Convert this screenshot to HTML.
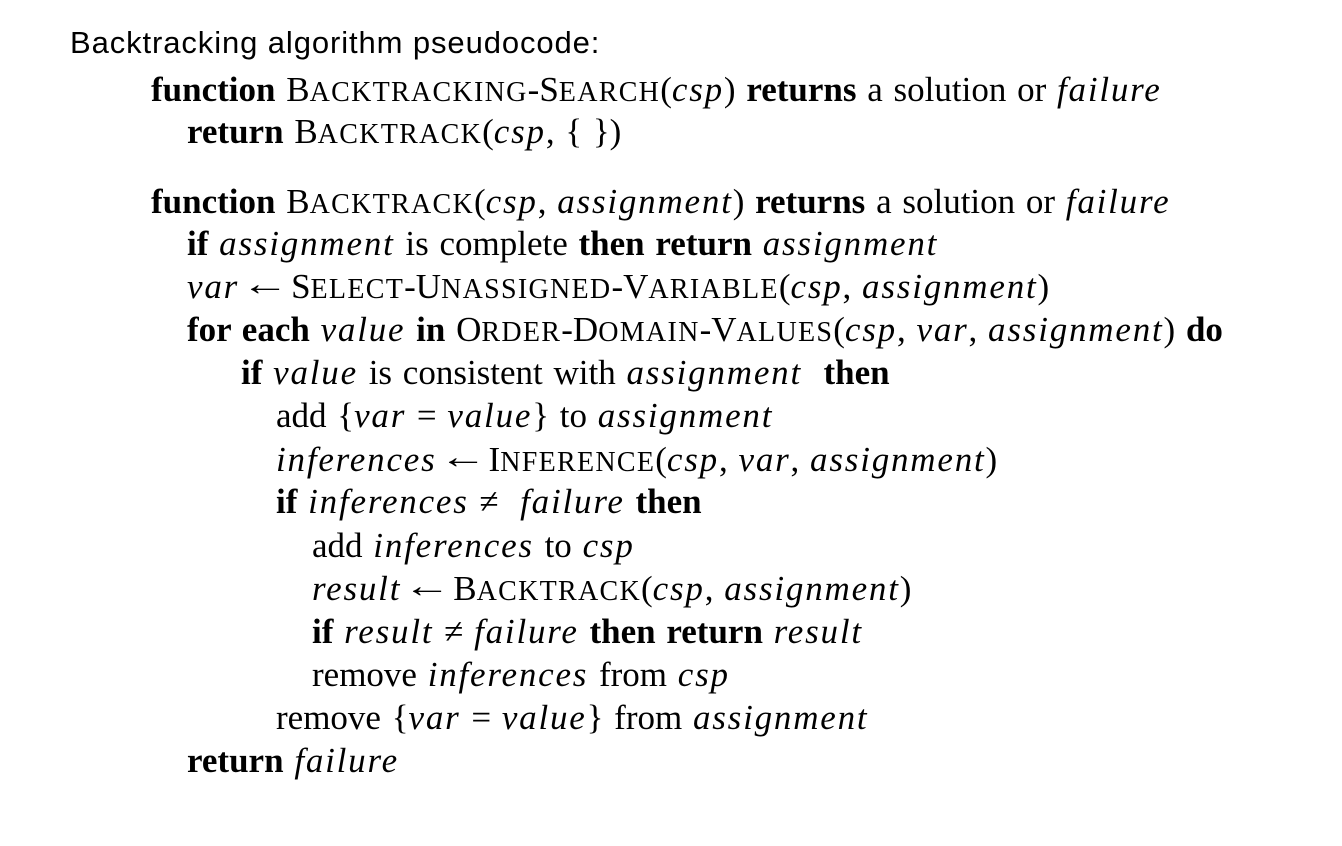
<!DOCTYPE html>
<html><head><meta charset="utf-8"><style>
body{margin:0;background:#fff;width:1342px;height:846px;position:relative;overflow:hidden;}
.t{position:absolute;left:70px;top:25px;font-family:"Liberation Sans",sans-serif;font-size:31px;letter-spacing:0.9px;color:#000;white-space:nowrap;}
.l{position:absolute;font-family:"Liberation Serif",serif;font-size:35px;line-height:32px;color:#000;white-space:nowrap;word-spacing:2px;}
b{font-weight:bold}
i{font-style:italic;letter-spacing:1.8px}
s{text-decoration:none;font-size:28px;letter-spacing:1.3px}
.a{font-size:34px;display:inline-block;transform:scaleX(1.4);margin:0 9px;position:relative;top:-3px}
</style></head><body>
<div class="t">Backtracking algorithm pseudocode:</div>
<div class="l" style="left:151px;top:74px"><b>function</b> B<s>ACKTRACKING</s>-S<s>EARCH</s>(<i>csp</i>) <b>returns</b> a solution or <i>failure</i></div>
<div class="l" style="left:187px;top:116px"><b>return</b> B<s>ACKTRACK</s>(<i>csp</i>, { })</div>
<div class="l" style="left:151px;top:186px"><b>function</b> B<s>ACKTRACK</s>(<i>csp</i>, <i>assignment</i>) <b>returns</b> a solution or <i>failure</i></div>
<div class="l" style="left:187px;top:228px"><b>if</b> <i>assignment</i> is complete <b>then return</b> <i>assignment</i></div>
<div class="l" style="left:187px;top:271px"><i>var</i><span class="a">←</span>S<s>ELECT</s>-U<s>NASSIGNED</s>-V<s>ARIABLE</s>(<i>csp</i>, <i>assignment</i>)</div>
<div class="l" style="left:187px;top:314px"><b>for each</b> <i>value</i> <b>in</b> O<s>RDER</s>-D<s>OMAIN</s>-V<s>ALUES</s>(<i>csp</i>, <i>var</i>, <i>assignment</i>) <b>do</b></div>
<div class="l" style="left:241px;top:357px"><b>if</b> <i>value</i> is consistent with <i>assignment</i> &nbsp;<b>then</b></div>
<div class="l" style="left:276px;top:400px">add {<i>var</i> = <i>value</i>} to <i>assignment</i></div>
<div class="l" style="left:276px;top:444px"><i>inferences</i><span class="a">←</span>I<s>NFERENCE</s>(<i>csp</i>, <i>var</i>, <i>assignment</i>)</div>
<div class="l" style="left:276px;top:486px"><b>if</b> <i>inferences</i> ≠ &nbsp;<i>failure</i> <b>then</b></div>
<div class="l" style="left:312px;top:530px">add <i>inferences</i> to <i>csp</i></div>
<div class="l" style="left:312px;top:573px"><i>result</i><span class="a">←</span>B<s>ACKTRACK</s>(<i>csp</i>, <i>assignment</i>)</div>
<div class="l" style="left:312px;top:616px"><b>if</b> <i>result</i> ≠ <i>failure</i> <b>then return</b> <i>result</i></div>
<div class="l" style="left:312px;top:659px">remove <i>inferences</i> from <i>csp</i></div>
<div class="l" style="left:276px;top:702px">remove {<i>var</i> = <i>value</i>} from <i>assignment</i></div>
<div class="l" style="left:187px;top:745px"><b>return</b> <i>failure</i></div>
</body></html>
